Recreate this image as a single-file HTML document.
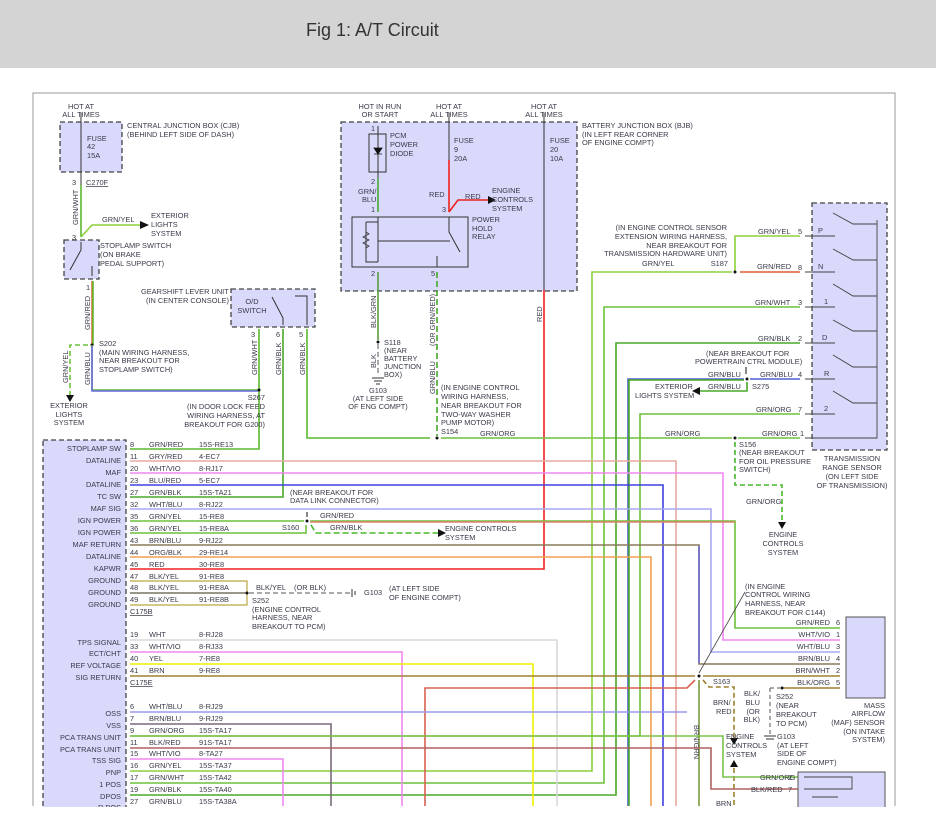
<!DOCTYPE html>
<html><head><meta charset="utf-8"><style>
html,body{margin:0;padding:0;background:#fff;}
body{width:936px;height:826px;overflow:hidden;position:relative;font-family:"Liberation Sans",sans-serif;}
.hdr{position:absolute;left:0;top:0;width:936px;height:68px;background:#d4d4d4;}
.hdr span{position:absolute;left:306px;top:20px;font-size:18px;color:#333;}
svg{position:absolute;left:0;top:0;}
text{font-family:"Liberation Sans",sans-serif;font-size:7.4px;fill:#3a3a4a;}
.box{fill:#d9d9fb;stroke:#444;stroke-width:1.3;stroke-dasharray:5 3;}
.w{fill:none;stroke-width:1.6;}
.r{text-anchor:end;}
.m{text-anchor:middle;}
</style></head><body>
<div class="hdr"><span>Fig 1: A/T Circuit</span></div>
<svg width="936" height="826" viewBox="0 0 936 826">
<!-- border -->
<path d="M33 806 V93 H895 V806" fill="none" stroke="#999" stroke-width="1"/>

<!-- CJB -->
<rect class="box" x="60" y="122" width="62" height="50"/>
<text x="81" y="109" class="m">HOT AT</text><text x="81" y="117" class="m">ALL TIMES</text>
<path d="M81 113 V185" stroke="#333" stroke-width="1" fill="none"/>
<text x="87" y="141">FUSE</text><text x="87" y="149">42</text><text x="87" y="158">15A</text>
<text x="127" y="128">CENTRAL JUNCTION BOX (CJB)</text><text x="127" y="137">(BEHIND LEFT SIDE OF DASH)</text>
<text x="72" y="185">3</text><text x="86" y="185" style="text-decoration:underline">C270F</text>
<path class="w" d="M81 185 V237" stroke="#5cb82e"/>
<text transform="translate(78,225) rotate(-90)">GRN/WHT</text>
<path class="w" d="M81 237 L92 225 H140" stroke="#8bd13a"/>
<path d="M140 221 L149 225 L140 229Z" fill="#111"/>
<text x="102" y="222">GRN/YEL</text>
<text x="151" y="218">EXTERIOR</text><text x="151" y="227">LIGHTS</text><text x="151" y="236">SYSTEM</text>
<text x="72" y="240">3</text>
<!-- stoplamp -->
<rect class="box" x="64" y="240" width="35" height="39"/>
<path d="M81 242 V250 L70 270 M92 266 V276" stroke="#333" stroke-width="1" fill="none"/>
<text x="100" y="248">STOPLAMP SWITCH</text><text x="100" y="257">(ON BRAKE</text><text x="100" y="266">PEDAL SUPPORT)</text>
<text x="86" y="290">1</text>
<path class="w" d="M92 281 V345" stroke="#e07040"/>
<path class="w" d="M93 281 V345" stroke="#5cb82e" stroke-width="0.8"/>
<text transform="translate(90,330) rotate(-90)">GRN/RED</text>
<circle cx="92" cy="345" r="1.5" fill="#111"/>
<path class="w" d="M92 345 V390 H259" stroke="#5cb82e"/>
<path class="w" d="M92 346 V391 H259" stroke="#6a6ae0" stroke-width="0.7"/>
<text transform="translate(90,385) rotate(-90)">GRN/BLU</text>
<path class="w" d="M88 345 H70 V395" stroke="#6cc23a" stroke-dasharray="5 3"/>
<path d="M66 395 L70 402 L74 395Z" fill="#111"/>
<text transform="translate(68,383) rotate(-90)">GRN/YEL</text>
<text x="99" y="346">S202</text><text x="99" y="355">(MAIN WIRING HARNESS,</text><text x="99" y="363">NEAR BREAKOUT FOR</text><text x="99" y="372">STOPLAMP SWITCH)</text>
<text x="69" y="408" class="m">EXTERIOR</text><text x="69" y="417" class="m">LIGHTS</text><text x="69" y="425" class="m">SYSTEM</text>

<!-- gearshift -->
<rect class="box" x="231" y="289" width="84" height="38"/>
<text x="252" y="304" class="m">O/D</text><text x="252" y="313" class="m">SWITCH</text>
<path d="M272 297 L283 318 V325 M295 296 H307 V325" stroke="#333" stroke-width="1" fill="none"/>
<text x="141" y="294">GEARSHIFT LEVER UNIT</text><text x="146" y="303">(IN CENTER CONSOLE)</text>
<text x="251" y="337">3</text><text x="276" y="337">6</text><text x="299" y="337">5</text>
<path class="w" d="M259 329 V449 H130" stroke="#5cb82e"/>
<text transform="translate(257,375) rotate(-90)">GRN/WHT</text>
<circle cx="259" cy="390" r="1.5" fill="#111"/>
<text x="265" y="400" class="r">S267</text><text x="265" y="409" class="r">(IN DOOR LOCK FEED</text><text x="265" y="418" class="r">WIRING HARNESS, AT</text><text x="265" y="427" class="r">BREAKOUT FOR G200)</text>
<path class="w" d="M283 329 V497 H130" stroke="#48a828"/>
<text transform="translate(281,375) rotate(-90)">GRN/BLK</text>
<path class="w" d="M307 329 V438 H430" stroke="#5cb82e"/>
<text transform="translate(305,375) rotate(-90)">GRN/BLK</text>

<!-- BJB -->
<rect class="box" x="341" y="122" width="236" height="169"/>
<text x="380" y="109" class="m">HOT IN RUN</text><text x="380" y="117" class="m">OR START</text>
<text x="449" y="109" class="m">HOT AT</text><text x="449" y="117" class="m">ALL TIMES</text>
<text x="544" y="109" class="m">HOT AT</text><text x="544" y="117" class="m">ALL TIMES</text>
<text x="582" y="128">BATTERY JUNCTION BOX (BJB)</text><text x="582" y="137">(IN LEFT REAR CORNER</text><text x="582" y="145">OF ENGINE COMPT)</text>
<text x="371" y="131">1</text>
<rect x="369" y="134" width="17" height="38" fill="none" stroke="#333" stroke-width="1"/>
<path d="M378 126 V210" stroke="#333" stroke-width="1" fill="none"/>
<path d="M374 148 H382 L378 154Z M374 154 H382" fill="#111" stroke="#111" stroke-width="0.8"/>
<text x="390" y="138">PCM</text><text x="390" y="147">POWER</text><text x="390" y="156">DIODE</text>
<text x="371" y="184">2</text>
<path class="w" d="M378 178 V212" stroke="#4aa838"/>
<text x="358" y="194">GRN/</text><text x="362" y="202">BLU</text>
<text x="371" y="212">1</text>
<rect x="352" y="217" width="116" height="50" fill="none" stroke="#333" stroke-width="1"/>
<path d="M378 217 V262 M366 222 V262 H378 M366 222 H378 M378 241 H450" stroke="#333" stroke-width="1" fill="none"/>
<path d="M378 241 H450" stroke="#333" stroke-dasharray="5 3" fill="none"/>
<path d="M366 232 l3 2 l-6 3 l6 3 l-6 3 l6 3 l-3 2" stroke="#333" fill="none" stroke-width="0.8"/>
<path d="M449 113 V160" stroke="#333" stroke-width="1" fill="none"/>
<path class="w" d="M449 160 V212" stroke="#f02020"/>
<text x="454" y="143">FUSE</text><text x="454" y="152">9</text><text x="454" y="161">20A</text>
<text x="429" y="197">RED</text>
<path class="w" d="M449 212 L458 200 H492" stroke="#f02020"/>
<path d="M488 196 L496 200 L488 204Z" fill="#111"/>
<text x="465" y="199">RED</text>
<text x="492" y="193">ENGINE</text><text x="492" y="202">CONTROLS</text><text x="492" y="211">SYSTEM</text>
<text x="442" y="212">3</text>
<path d="M449 217 V232 L460 252" stroke="#333" stroke-width="1" fill="none"/>
<text x="472" y="222">POWER</text><text x="472" y="231">HOLD</text><text x="472" y="239">RELAY</text>
<path d="M437 256 V267" stroke="#333" fill="none"/>
<text x="371" y="276">2</text><text x="431" y="276">5</text>
<path d="M544 113 V290" stroke="#333" stroke-width="1" fill="none"/>
<text x="550" y="143">FUSE</text><text x="550" y="152">20</text><text x="550" y="161">10A</text>
<path class="w" d="M544 290 V569 H130" stroke="#f02020"/>
<text transform="translate(542,322) rotate(-90)">RED</text>
<path class="w" d="M378 272 V340" stroke="#5c9c40"/>
<text transform="translate(376,328) rotate(-90)">BLK/GRN</text>
<circle cx="378" cy="342" r="1.5" fill="#111"/>
<path d="M378 344 V375" stroke="#555" stroke-dasharray="5 3" fill="none"/>
<text transform="translate(376,368) rotate(-90)">BLK</text>
<path d="M372 378 H384 M374 381 H382 M376 384 H380" stroke="#333"/>
<text x="384" y="345">S118</text><text x="384" y="353">(NEAR</text><text x="384" y="361">BATTERY</text><text x="384" y="369">JUNCTION</text><text x="384" y="377">BOX)</text>
<text x="378" y="393" class="m">G103</text><text x="378" y="401" class="m">(AT LEFT SIDE</text><text x="378" y="409" class="m">OF ENG COMPT)</text>
<path class="w" d="M437 272 V436" stroke="#48a828" stroke-dasharray="6 3"/>
<text transform="translate(435,346) rotate(-90)">(OR GRN/RED)</text>
<text transform="translate(435,394) rotate(-90)">GRN/BLU</text>
<text x="441" y="390">(IN ENGINE CONTROL</text><text x="441" y="399">WIRING HARNESS,</text><text x="441" y="408">NEAR BREAKOUT FOR</text><text x="441" y="417">TWO-WAY WASHER</text><text x="441" y="425">PUMP MOTOR)</text>
<text x="441" y="434">S154</text>
<circle cx="437" cy="438" r="1.5" fill="#111"/>
<path class="w" d="M441 438 H732 M738 438 H800" stroke="#6cc23a"/>
<text x="480" y="436">GRN/ORG</text><text x="665" y="436">GRN/ORG</text><text x="762" y="436">GRN/ORG</text>

<!-- TRS -->
<rect class="box" x="812" y="203" width="75" height="247"/>
<path d="M805 236 H835 M805 272 H835 M805 307 H835 M805 343 H835 M805 379 H835 M805 414 H835 M805 438 H877 V220 M833 213 L853 224 H877 M833 249 L853 260 H877 M833 284 L853 296 H877 M833 320 L853 331 H877 M833 355 L853 367 H877 M833 391 L853 403 H877" stroke="#444" stroke-width="0.9" fill="none"/>
<text x="818" y="233">P</text><text x="818" y="269">N</text><text x="824" y="304">1</text><text x="822" y="340">D</text><text x="824" y="376">R</text><text x="824" y="411">2</text>
<text x="798" y="234">5</text><text x="798" y="270">8</text><text x="798" y="305">3</text><text x="798" y="341">2</text><text x="798" y="377">4</text><text x="798" y="412">7</text><text x="800" y="436">1</text>
<text x="852" y="461" class="m">TRANSMISSION</text><text x="852" y="470" class="m">RANGE SENSOR</text><text x="852" y="479" class="m">(ON LEFT SIDE</text><text x="852" y="488" class="m">OF TRANSMISSION)</text>
<path class="w" d="M735 272 V236 H800" stroke="#8bd13a"/>
<text x="758" y="234">GRN/YEL</text>
<text x="727" y="230" class="r">(IN ENGINE CONTROL SENSOR</text><text x="727" y="239" class="r">EXTENSION WIRING HARNESS,</text><text x="727" y="248" class="r">NEAR BREAKOUT FOR</text><text x="727" y="256" class="r">TRANSMISSION HARDWARE UNIT)</text>
<text x="642" y="266">GRN/YEL</text><text x="728" y="266" class="r">S187</text>
<circle cx="735" cy="272" r="1.5" fill="#111"/>
<path class="w" d="M732 272 H592 V771 H130" stroke="#8bd13a"/>
<path class="w" d="M740 272 H800" stroke="#e05a30"/>
<text x="757" y="269">GRN/RED</text>
<path class="w" d="M800 307 H604 V783 H130" stroke="#6cc23a"/>
<text x="755" y="305">GRN/WHT</text>
<path class="w" d="M800 343 H616 V795 H130" stroke="#48a828"/>
<text x="758" y="341">GRN/BLK</text>
<text x="706" y="356">(NEAR BREAKOUT FOR</text><text x="695" y="364">POWERTRAIN CTRL MODULE)</text>
<path d="M746 367 V374" stroke="#111"/>
<path class="w" d="M744 379 H628 V806" stroke="#5060d0"/>
<path class="w" d="M744 380 H629 V806" stroke="#48a828" stroke-width="0.8"/>
<path class="w" d="M750 379 H800" stroke="#5060d0"/>
<circle cx="747" cy="379" r="1.5" fill="#111"/>
<text x="708" y="377">GRN/BLU</text><text x="760" y="377">GRN/BLU</text>
<path class="w" d="M747 382 V391 H698" stroke="#48a828"/>
<path d="M700 387 L692 391 L700 395Z" fill="#111"/>
<text x="708" y="389">GRN/BLU</text><text x="752" y="389">S275</text>
<text x="655" y="389">EXTERIOR</text><text x="635" y="398">LIGHTS SYSTEM</text>
<path class="w" d="M800 414 H640 V736 H130" stroke="#6cc23a"/>
<text x="756" y="412">GRN/ORG</text>
<circle cx="735" cy="438" r="1.5" fill="#111"/>
<text x="739" y="447">S156</text><text x="739" y="455">(NEAR BREAKOUT</text><text x="739" y="464">FOR OIL PRESSURE</text><text x="739" y="472">SWITCH)</text>
<path class="w" d="M735 442 V485 H782 V520" stroke="#48b828" stroke-dasharray="5 3"/>
<path d="M778 522 L782 529 L786 522Z" fill="#111"/>
<text x="746" y="504">GRN/ORG</text>
<text x="783" y="537" class="m">ENGINE</text><text x="783" y="546" class="m">CONTROLS</text><text x="783" y="555" class="m">SYSTEM</text>

<!-- PCM box -->
<rect class="box" x="43" y="440" width="83" height="380"/>
<g>
<text x="121" y="451" class="r">STOPLAMP SW</text><text x="121" y="463" class="r">DATALINE</text><text x="121" y="475" class="r">MAF</text><text x="121" y="487" class="r">DATALINE</text><text x="121" y="499" class="r">TC SW</text><text x="121" y="511" class="r">MAF SIG</text><text x="121" y="523" class="r">IGN POWER</text><text x="121" y="535" class="r">IGN POWER</text><text x="121" y="547" class="r">MAF RETURN</text><text x="121" y="559" class="r">DATALINE</text><text x="121" y="571" class="r">KAPWR</text><text x="121" y="583" class="r">GROUND</text><text x="121" y="595" class="r">GROUND</text><text x="121" y="607" class="r">GROUND</text>
<text x="130" y="447">8</text><text x="130" y="459">11</text><text x="130" y="471">20</text><text x="130" y="483">23</text><text x="130" y="495">27</text><text x="130" y="507">32</text><text x="130" y="519">35</text><text x="130" y="531">36</text><text x="130" y="543">43</text><text x="130" y="555">44</text><text x="130" y="567">45</text><text x="130" y="579">47</text><text x="130" y="590">48</text><text x="130" y="602">49</text>
<text x="149" y="447">GRN/RED</text><text x="149" y="459">GRY/RED</text><text x="149" y="471">WHT/VIO</text><text x="149" y="483">BLU/RED</text><text x="149" y="495">GRN/BLK</text><text x="149" y="507">WHT/BLU</text><text x="149" y="519">GRN/YEL</text><text x="149" y="531">GRN/YEL</text><text x="149" y="543">BRN/BLU</text><text x="149" y="555">ORG/BLK</text><text x="149" y="567">RED</text><text x="149" y="579">BLK/YEL</text><text x="149" y="590">BLK/YEL</text><text x="149" y="602">BLK/YEL</text>
<text x="199" y="447">15S-RE13</text><text x="199" y="459">4-EC7</text><text x="199" y="471">8-RJ17</text><text x="199" y="483">5-EC7</text><text x="199" y="495">15S-TA21</text><text x="199" y="507">8-RJ22</text><text x="199" y="519">15-RE8</text><text x="199" y="531">15-RE8A</text><text x="199" y="543">9-RJ22</text><text x="199" y="555">29-RE14</text><text x="199" y="567">30-RE8</text><text x="199" y="579">91-RE8</text><text x="199" y="590">91-RE8A</text><text x="199" y="602">91-RE8B</text>
<text x="130" y="614" style="text-decoration:underline">C175B</text>
</g>
<path class="w" d="M130 461 H676 V806" stroke="#e8a8a0"/>
<path class="w" d="M130 473 H723 V640 H840" stroke="#f088f0"/>
<path class="w" d="M130 485 H663 V806" stroke="#4040e0"/>
<path class="w" d="M130 509 H711 V652 H840" stroke="#a8a8f4"/>
<path class="w" d="M130 521 H304 M310 521 H735 V628 H840" stroke="#6cc23a"/>
<path class="w" d="M310 522 H735" stroke="#e08070" stroke-width="0.7"/>
<text x="320" y="518">GRN/RED</text>
<path class="w" d="M130 533 H306 V525" stroke="#6cc23a"/>
<circle cx="307" cy="521" r="1.5" fill="#111"/>
<path d="M307 512 V517" stroke="#111"/>
<text x="290" y="495">(NEAR BREAKOUT FOR</text><text x="290" y="503">DATA LINK CONNECTOR)</text>
<text x="282" y="530">S160</text>
<path class="w" d="M311 525 L316 533 H438" stroke="#48b828" stroke-dasharray="6 3"/>
<path d="M438 529 L446 533 L438 537Z" fill="#111"/>
<text x="330" y="530">GRN/BLK</text>
<text x="445" y="531">ENGINE CONTROLS</text><text x="445" y="540">SYSTEM</text>
<path class="w" d="M130 545 H699 V664 H840" stroke="#8a7a5a"/>
<path class="w" d="M699 546 V663" stroke="#6a6ad0" stroke-width="0.7"/>
<path class="w" d="M130 557 H651 V806" stroke="#f0a050"/>
<path d="M130 581 H247 V605 H130 M130 593 H247" stroke="#bba640" stroke-width="1.2" fill="none"/>
<path d="M130 593 H247" stroke="#444" stroke-width="1" fill="none"/>
<circle cx="247" cy="593" r="1.5" fill="#111"/>
<path d="M249 593 H350" stroke="#555" stroke-dasharray="5 3" fill="none"/>
<path d="M352 589 V597 M355 591 V595" stroke="#333"/>
<text x="256" y="590">BLK/YEL</text><text x="294" y="590">(OR BLK)</text>
<text x="364" y="595">G103</text><text x="389" y="591">(AT LEFT SIDE</text><text x="389" y="600">OF ENGINE COMPT)</text>
<text x="252" y="603">S252</text><text x="252" y="612">(ENGINE CONTROL</text><text x="252" y="620">HARNESS, NEAR</text><text x="252" y="629">BREAKOUT TO PCM)</text>

<!-- group 2 -->
<text x="121" y="645" class="r">TPS SIGNAL</text><text x="121" y="656" class="r">ECT/CHT</text><text x="121" y="668" class="r">REF VOLTAGE</text><text x="121" y="680" class="r">SIG RETURN</text>
<text x="130" y="637">19</text><text x="130" y="649">33</text><text x="130" y="661">40</text><text x="130" y="673">41</text>
<text x="149" y="637">WHT</text><text x="149" y="649">WHT/VIO</text><text x="149" y="661">YEL</text><text x="149" y="673">BRN</text>
<text x="199" y="637">8-RJ28</text><text x="199" y="649">8-RJ33</text><text x="199" y="661">7-RE8</text><text x="199" y="673">9-RE8</text>
<text x="130" y="685" style="text-decoration:underline">C175E</text>
<path class="w" d="M130 640 H557 V806" stroke="#d8d8d8"/>
<path class="w" d="M130 652 H402 V806" stroke="#f088f0"/>
<path class="w" d="M130 664 H533 V806" stroke="#f0f000"/>
<path class="w" d="M130 676 H695 M703 676 H840" stroke="#a08030"/>
<path class="w" d="M425 806 V688 H687 L695 680" stroke="#d86050"/>
<circle cx="699" cy="676" r="1.5" fill="#111"/>
<path d="M699 673 L745 592" stroke="#444" stroke-width="0.8"/>
<text x="745" y="589">(IN ENGINE</text><text x="745" y="597">CONTROL WIRING</text><text x="745" y="606">HARNESS, NEAR</text><text x="745" y="615">BREAKOUT FOR C144)</text>
<path class="w" d="M699 680 V806" stroke="#7a9a40"/>
<text transform="translate(694,725) rotate(90)">BRN/GRN</text>
<path class="w" d="M703 680 L709 687 H734 V740" stroke="#a08030" stroke-dasharray="5 3"/>
<text x="713" y="684">S163</text>
<text x="713" y="705">BRN/</text><text x="716" y="714">RED</text>
<path d="M730 738 L734 745 L738 738Z" fill="#111"/>
<text x="726" y="739">ENGINE</text><text x="726" y="748">CONTROLS</text><text x="726" y="757">SYSTEM</text>
<path d="M730 767 L734 760 L738 767Z" fill="#111"/>
<path class="w" d="M734 768 V806" stroke="#a08030" stroke-dasharray="5 3"/>
<text x="716" y="806">BRN</text>
<!-- MAF -->
<rect x="846" y="617" width="39" height="81" fill="#d9d9fb" stroke="#555" stroke-width="1"/>
<text x="830" y="625" class="r">GRN/RED</text><text x="830" y="637" class="r">WHT/VIO</text><text x="830" y="649" class="r">WHT/BLU</text><text x="830" y="661" class="r">BRN/BLU</text><text x="830" y="673" class="r">BRN/WHT</text><text x="830" y="685" class="r">BLK/ORG</text>
<text x="836" y="625">6</text><text x="836" y="637">1</text><text x="836" y="649">3</text><text x="836" y="661">4</text><text x="836" y="673">2</text><text x="836" y="685">5</text>
<path class="w" d="M782 688 H840" stroke="#a08030"/>
<circle cx="782" cy="688" r="1.5" fill="#111"/>
<path d="M770 688 H780 M770 688 V734" stroke="#555" stroke-dasharray="4 3" fill="none"/>
<path d="M764 736 H776 M766 739 H774" stroke="#333"/>
<text x="760" y="696" class="r">BLK/</text><text x="760" y="705" class="r">BLU</text><text x="760" y="714" class="r">(OR</text><text x="760" y="722" class="r">BLK)</text>
<text x="776" y="699">S252</text><text x="776" y="708">(NEAR</text><text x="776" y="717">BREAKOUT</text><text x="776" y="726">TO PCM)</text>
<text x="777" y="739">G103</text><text x="777" y="748">(AT LEFT</text><text x="777" y="756">SIDE OF</text><text x="777" y="765">ENGINE COMPT)</text>
<text x="885" y="708" class="r">MASS</text><text x="885" y="716" class="r">AIRFLOW</text><text x="885" y="725" class="r">(MAF) SENSOR</text><text x="885" y="734" class="r">(ON INTAKE</text><text x="885" y="742" class="r">SYSTEM)</text>

<!-- group 3 -->
<text x="121" y="716" class="r">OSS</text><text x="121" y="728" class="r">VSS</text><text x="121" y="740" class="r">PCA TRANS UNIT</text><text x="121" y="752" class="r">PCA TRANS UNIT</text><text x="121" y="763" class="r">TSS SIG</text><text x="121" y="775" class="r">PNP</text><text x="121" y="787" class="r">1 POS</text><text x="121" y="799" class="r">DPOS</text><text x="121" y="810" class="r">R POS</text>
<text x="130" y="709">6</text><text x="130" y="721">7</text><text x="130" y="733">9</text><text x="130" y="745">11</text><text x="130" y="756">15</text><text x="130" y="768">16</text><text x="130" y="780">17</text><text x="130" y="792">19</text><text x="130" y="804">27</text>
<text x="149" y="709">WHT/BLU</text><text x="149" y="721">BRN/BLU</text><text x="149" y="733">GRN/ORG</text><text x="149" y="745">BLK/RED</text><text x="149" y="756">WHT/VIO</text><text x="149" y="768">GRN/YEL</text><text x="149" y="780">GRN/WHT</text><text x="149" y="792">GRN/BLK</text><text x="149" y="804">GRN/BLU</text>
<text x="199" y="709">8-RJ29</text><text x="199" y="721">9-RJ29</text><text x="199" y="733">15S-TA17</text><text x="199" y="745">91S-TA17</text><text x="199" y="756">8-TA27</text><text x="199" y="768">15S-TA37</text><text x="199" y="780">15S-TA42</text><text x="199" y="792">15S-TA40</text><text x="199" y="804">15S-TA38A</text>
<path class="w" d="M130 712 H687" stroke="#9a9af0"/>
<path class="w" d="M130 724 H331 V806" stroke="#7a6a7a"/>
<path class="w" d="M130 736 H723 V777 H798" stroke="#7cc24a"/>
<path class="w" d="M130 748 H711 V789 H798" stroke="#b06060"/>
<path class="w" d="M130 759 H283 V806" stroke="#f088f0"/>
<text x="760" y="780">GRN/ORG</text><text x="788" y="780">2</text>
<text x="751" y="792">BLK/RED</text><text x="788" y="792">7</text>
<rect x="798" y="772" width="87" height="40" fill="#d9d9fb" stroke="#555" stroke-width="1"/>
<path d="M804 777 H852 V789 H804 M812 797 H838" stroke="#444" stroke-width="0.9" fill="none"/>
<rect x="0" y="807" width="936" height="19" fill="#fff"/>
</svg>
</body></html>
